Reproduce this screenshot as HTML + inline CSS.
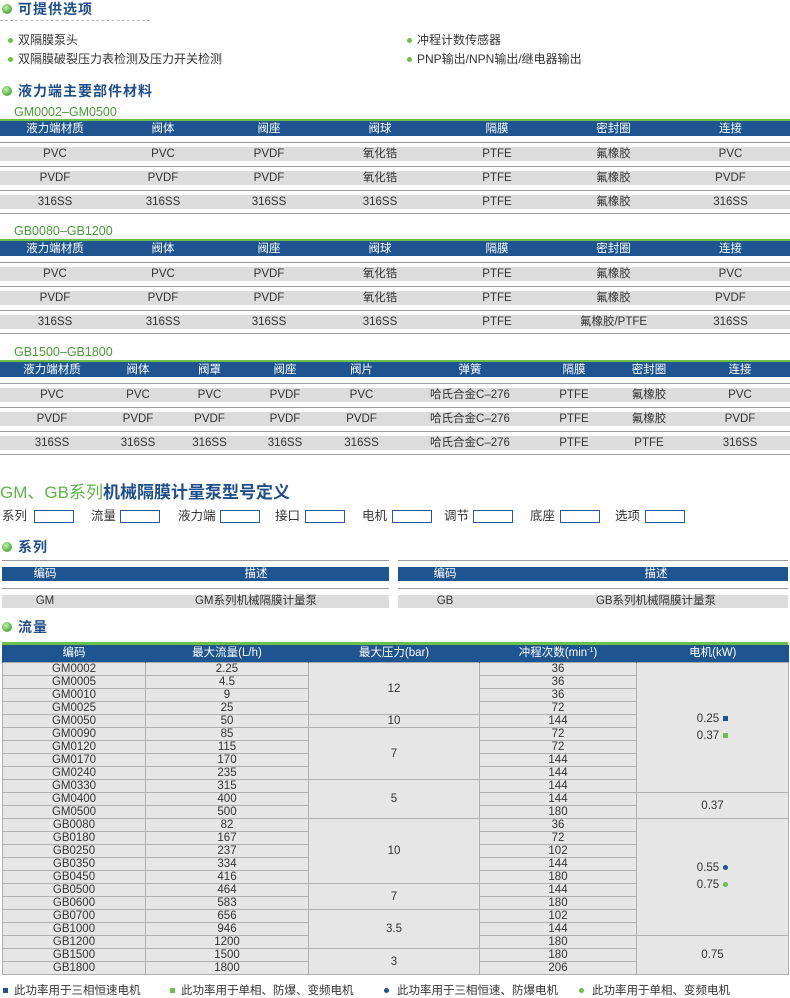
<!DOCTYPE html>
<html><head><meta charset="utf-8">
<style>
*{margin:0;padding:0;box-sizing:border-box}
body{width:790px;height:997px;background:#fff;position:relative;overflow:hidden;font-family:"Liberation Sans","Noto Sans CJK SC",sans-serif;color:#333}
.a{position:absolute}
.h{position:absolute;left:2px;font-size:14px;font-weight:bold;color:#1f4e8c;line-height:18px;padding-left:16px;letter-spacing:1px}
.h:before{content:"";position:absolute;left:0;top:4px;width:10px;height:10px;border-radius:50%;background:radial-gradient(circle at 40% 35%,#c8f0b0,#5bb544 60%,#3f8f2e)}
.li{position:absolute;font-size:12px;line-height:16px;color:#333;padding-left:14px}
.li:before{content:"";position:absolute;left:4px;top:6px;width:5px;height:5px;border-radius:50%;background:#6cc04a}
.sub{position:absolute;left:14px;font-size:12.5px;color:#4a9a3a;line-height:16px}
.mt{position:absolute;left:0;width:790px}
.mt .top{height:2px;background:#6cc04a}
.mt .hd{height:15px;background:#1e5490;color:#fff;display:flex;font-size:11.5px;line-height:16px}
.mt .hd div,.mt .band div{text-align:center}
.mt .ln{height:1px;background:#9a9a9a}
.mt .band{height:14px;background:#dcdcdc;display:flex;font-size:11.5px;line-height:14px;color:#333}
.mt .w4{height:4px}.mt .w5{height:5px}.mt .w6{height:6px}
.box{position:absolute;top:510px;height:13px;border:1.5px solid #2a5a95}
.lb{position:absolute;top:508px;font-size:12.5px;line-height:16px;color:#333}
.st{position:absolute;top:560px}
.st .ln{height:1px;background:#9a9a9a}
.st .hd{height:14px;background:#1e5490;color:#fff;font-size:11.5px;line-height:14px;position:relative}
.st .bd{height:13px;background:#dcdcdc;font-size:11.5px;line-height:13px;position:relative}
.st span{position:absolute;top:0;transform:translateX(-50%)}
table.f{position:absolute;left:2px;top:645px;width:786px;border-collapse:collapse;table-layout:fixed;font-size:11.5px;color:#333}
table.f th{height:17px;background:#1e5490;color:#fff;font-weight:normal;font-size:11.5px;line-height:17px;border-left:1px solid #1e5490;padding:0}
table.f th sup{font-size:7px;line-height:0;vertical-align:4px}
table.f td{height:13px;line-height:12px;background:#e6e6e6;border:1px solid #b0b0b0;border-top-color:#a8a8a8;text-align:center;padding:0}
.sq{display:inline-block;width:5px;height:5px;margin-left:4px;vertical-align:1px}
.dt{display:inline-block;width:5px;height:5px;border-radius:50%;margin-left:4px;vertical-align:1px}
.lg{position:absolute;top:984px;font-size:11.5px;line-height:14px;color:#333}
</style></head><body>

<div class="h" style="top:0">可提供选项</div>
<div class="a" style="left:0;top:20px;width:150px;border-top:1px dashed #bbb"></div>
<div class="li" style="left:4px;top:32px">双隔膜泵头</div>
<div class="li" style="left:4px;top:51px">双隔膜破裂压力表检测及压力开关检测</div>
<div class="li" style="left:403px;top:32px">冲程计数传感器</div>
<div class="li" style="left:403px;top:51px">PNP输出/NPN输出/继电器输出</div>

<div class="h" style="top:82px">液力端主要部件材料</div>
<div class="sub" style="top:104px">GM0002–GM0500</div>
<div class="mt" style="top:119px">
<div class="top"></div>
<div class="hd"><div style="width:110px">液力端材质</div><div style="width:106px">阀体</div><div style="width:106px">阀座</div><div style="width:116px">阀球</div><div style="width:118px">隔膜</div><div style="width:115px">密封圈</div><div style="width:119px">连接</div></div>
<div class="w6"></div>
<div class="ln"></div><div class="w4"></div>
<div class="band"><div style="width:110px">PVC</div><div style="width:106px">PVC</div><div style="width:106px">PVDF</div><div style="width:116px">氧化锆</div><div style="width:118px">PTFE</div><div style="width:115px">氟橡胶</div><div style="width:119px">PVC</div></div>
<div class="w5"></div><div class="ln"></div><div class="w4"></div>
<div class="band"><div style="width:110px">PVDF</div><div style="width:106px">PVDF</div><div style="width:106px">PVDF</div><div style="width:116px">氧化锆</div><div style="width:118px">PTFE</div><div style="width:115px">氟橡胶</div><div style="width:119px">PVDF</div></div>
<div class="w5"></div><div class="ln"></div><div class="w4"></div>
<div class="band"><div style="width:110px">316SS</div><div style="width:106px">316SS</div><div style="width:106px">316SS</div><div style="width:116px">316SS</div><div style="width:118px">PTFE</div><div style="width:115px">氟橡胶</div><div style="width:119px">316SS</div></div>
<div class="w4"></div><div class="ln"></div>
</div>

<div class="sub" style="top:223px">GB0080–GB1200</div>
<div class="mt" style="top:239px">
<div class="top"></div>
<div class="hd"><div style="width:110px">液力端材质</div><div style="width:106px">阀体</div><div style="width:106px">阀座</div><div style="width:116px">阀球</div><div style="width:118px">隔膜</div><div style="width:115px">密封圈</div><div style="width:119px">连接</div></div>
<div class="w6"></div>
<div class="ln"></div><div class="w4"></div>
<div class="band"><div style="width:110px">PVC</div><div style="width:106px">PVC</div><div style="width:106px">PVDF</div><div style="width:116px">氧化锆</div><div style="width:118px">PTFE</div><div style="width:115px">氟橡胶</div><div style="width:119px">PVC</div></div>
<div class="w5"></div><div class="ln"></div><div class="w4"></div>
<div class="band"><div style="width:110px">PVDF</div><div style="width:106px">PVDF</div><div style="width:106px">PVDF</div><div style="width:116px">氧化锆</div><div style="width:118px">PTFE</div><div style="width:115px">氟橡胶</div><div style="width:119px">PVDF</div></div>
<div class="w5"></div><div class="ln"></div><div class="w4"></div>
<div class="band"><div style="width:110px">316SS</div><div style="width:106px">316SS</div><div style="width:106px">316SS</div><div style="width:116px">316SS</div><div style="width:118px">PTFE</div><div style="width:115px">氟橡胶/PTFE</div><div style="width:119px">316SS</div></div>
<div class="w4"></div><div class="ln"></div>
</div>

<div class="sub" style="top:344px">GB1500–GB1800</div>
<div class="mt" style="top:360px">
<div class="top"></div>
<div class="hd"><div style="width:104px">液力端材质</div><div style="width:68px">阀体</div><div style="width:75px">阀罩</div><div style="width:76px">阀座</div><div style="width:77px">阀片</div><div style="width:140px">弹簧</div><div style="width:68px">隔膜</div><div style="width:82px">密封圈</div><div style="width:100px">连接</div></div>
<div class="w6"></div>
<div class="ln"></div><div class="w4"></div>
<div class="band"><div style="width:104px">PVC</div><div style="width:68px">PVC</div><div style="width:75px">PVC</div><div style="width:76px">PVDF</div><div style="width:77px">PVC</div><div style="width:140px">哈氏合金C–276</div><div style="width:68px">PTFE</div><div style="width:82px">氟橡胶</div><div style="width:100px">PVC</div></div>
<div class="w5"></div><div class="ln"></div><div class="w4"></div>
<div class="band"><div style="width:104px">PVDF</div><div style="width:68px">PVDF</div><div style="width:75px">PVDF</div><div style="width:76px">PVDF</div><div style="width:77px">PVDF</div><div style="width:140px">哈氏合金C–276</div><div style="width:68px">PTFE</div><div style="width:82px">氟橡胶</div><div style="width:100px">PVDF</div></div>
<div class="w5"></div><div class="ln"></div><div class="w4"></div>
<div class="band"><div style="width:104px">316SS</div><div style="width:68px">316SS</div><div style="width:75px">316SS</div><div style="width:76px">316SS</div><div style="width:77px">316SS</div><div style="width:140px">哈氏合金C–276</div><div style="width:68px">PTFE</div><div style="width:82px">PTFE</div><div style="width:100px">316SS</div></div>
<div class="w4"></div><div class="ln"></div>
</div>

<div class="a" style="left:0;top:482px;font-size:17px;font-weight:bold;line-height:22px;color:#1f4e8c"><span style="color:#5bb544;font-weight:normal">GM、GB系列</span>机械隔膜计量泵型号定义</div>

<div class="lb" style="left:2px">系列</div><div class="box" style="left:34px;width:40px"></div>
<div class="lb" style="left:91px">流量</div><div class="box" style="left:120px;width:40px"></div>
<div class="lb" style="left:178px">液力端</div><div class="box" style="left:220px;width:40px"></div>
<div class="lb" style="left:275px">接口</div><div class="box" style="left:305px;width:40px"></div>
<div class="lb" style="left:362px">电机</div><div class="box" style="left:392px;width:40px"></div>
<div class="lb" style="left:444px">调节</div><div class="box" style="left:473px;width:40px"></div>
<div class="lb" style="left:530px">底座</div><div class="box" style="left:560px;width:40px"></div>
<div class="lb" style="left:615px">选项</div><div class="box" style="left:645px;width:40px"></div>

<div class="h" style="top:538px">系列</div>
<div class="st" style="left:2px;width:387px">
<div class="ln"></div><div style="height:6px"></div>
<div class="hd"><span style="left:43px">编码</span><span style="left:254px">描述</span></div>
<div style="height:7px"></div><div class="ln"></div><div style="height:6px"></div>
<div class="bd"><span style="left:43px">GM</span><span style="left:254px">GM系列机械隔膜计量泵</span></div>
</div>
<div class="st" style="left:398px;width:390px">
<div class="ln"></div><div style="height:6px"></div>
<div class="hd"><span style="left:47px">编码</span><span style="left:258px">描述</span></div>
<div style="height:7px"></div><div class="ln"></div><div style="height:6px"></div>
<div class="bd"><span style="left:47px">GB</span><span style="left:258px">GB系列机械隔膜计量泵</span></div>
</div>

<div class="h" style="top:618px">流量</div>
<div class="a" style="left:2px;top:642px;width:786px;height:3px;background:#6cc04a"></div>
<table class="f">
<colgroup><col style="width:143px"><col style="width:163px"><col style="width:171px"><col style="width:157px"><col style="width:152px"></colgroup>
<tr><th>编码</th><th>最大流量(L/h)</th><th>最大压力(bar)</th><th>冲程次数(min<sup>-1</sup>)</th><th>电机(kW)</th></tr>
<tr><td>GM0002</td><td>2.25</td><td rowspan="4">12</td><td>36</td><td rowspan="10" style="line-height:17px">0.25<span class="sq" style="background:#1e5490"></span><br>0.37<span class="sq" style="background:#6cc04a"></span></td></tr>
<tr><td>GM0005</td><td>4.5</td><td>36</td></tr>
<tr><td>GM0010</td><td>9</td><td>36</td></tr>
<tr><td>GM0025</td><td>25</td><td>72</td></tr>
<tr><td>GM0050</td><td>50</td><td>10</td><td>144</td></tr>
<tr><td>GM0090</td><td>85</td><td rowspan="4">7</td><td>72</td></tr>
<tr><td>GM0120</td><td>115</td><td>72</td></tr>
<tr><td>GM0170</td><td>170</td><td>144</td></tr>
<tr><td>GM0240</td><td>235</td><td>144</td></tr>
<tr><td>GM0330</td><td>315</td><td rowspan="3">5</td><td>144</td></tr>
<tr><td>GM0400</td><td>400</td><td>144</td><td rowspan="2">0.37</td></tr>
<tr><td>GM0500</td><td>500</td><td>180</td></tr>
<tr><td>GB0080</td><td>82</td><td rowspan="5">10</td><td>36</td><td rowspan="9" style="line-height:17px">0.55<span class="dt" style="background:#1e5490"></span><br>0.75<span class="dt" style="background:#6cc04a"></span></td></tr>
<tr><td>GB0180</td><td>167</td><td>72</td></tr>
<tr><td>GB0250</td><td>237</td><td>102</td></tr>
<tr><td>GB0350</td><td>334</td><td>144</td></tr>
<tr><td>GB0450</td><td>416</td><td>180</td></tr>
<tr><td>GB0500</td><td>464</td><td rowspan="2">7</td><td>144</td></tr>
<tr><td>GB0600</td><td>583</td><td>180</td></tr>
<tr><td>GB0700</td><td>656</td><td rowspan="3">3.5</td><td>102</td></tr>
<tr><td>GB1000</td><td>946</td><td>144</td></tr>
<tr><td>GB1200</td><td>1200</td><td>180</td><td rowspan="3">0.75</td></tr>
<tr><td>GB1500</td><td>1500</td><td rowspan="2">3</td><td>180</td></tr>
<tr><td>GB1800</td><td>1800</td><td>206</td></tr>
</table>

<div class="lg" style="left:3px"><span class="sq" style="background:#1e5490;margin:0 6px 0 0"></span>此功率用于三相恒速电机</div>
<div class="lg" style="left:170px"><span class="sq" style="background:#6cc04a;margin:0 6px 0 0"></span>此功率用于单相、防爆、变频电机</div>
<div class="lg" style="left:384px"><span class="dt" style="background:#1e5490;margin:0 8px 0 0"></span>此功率用于三相恒速、防爆电机</div>
<div class="lg" style="left:579px"><span class="dt" style="background:#6cc04a;margin:0 8px 0 0"></span>此功率用于单相、变频电机</div>
</body></html>
